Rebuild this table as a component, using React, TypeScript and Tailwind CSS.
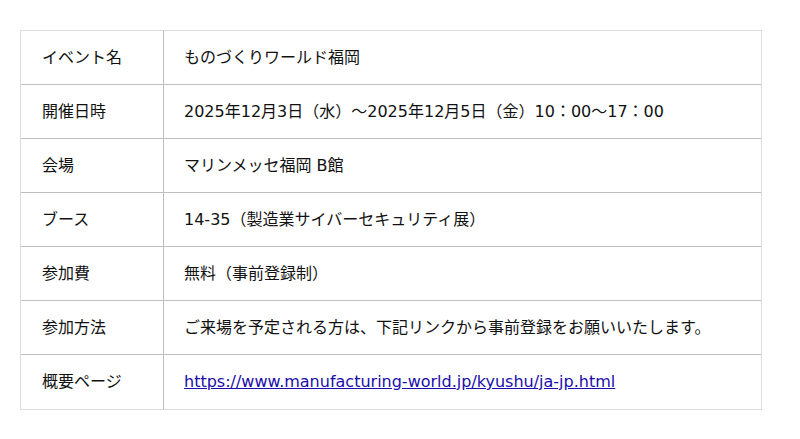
const rows: { label: string; value: string; href?: boolean }[] = [
  { label: 'イベント名', value: 'ものづくりワールド福岡' },
  { label: '開催日時', value: '2025年12月3日（水）～2025年12月5日（金）10：00～17：00' },
  { label: '会場', value: 'マリンメッセ福岡 B館' },
  { label: 'ブース', value: '14-35（製造業サイバーセキュリティ展）' },
  { label: '参加費', value: '無料（事前登録制）' },
  { label: '参加方法', value: 'ご来場を予定される方は、下記リンクから事前登録をお願いいたします。' },
  {
    label: '概要ページ',
    value: 'https://www.manufacturing-world.jp/kyushu/ja-jp.html',
    href: true,
  },
];

export default function App() {
  return (
    <div
      className="w-[800px] h-[439px] bg-white pt-[30px] pl-[20px] text-[16px] text-[#111]"
      style={{ fontFamily: '"DejaVu Sans", "Noto Sans CJK JP", sans-serif' }}
    >
      <div className="w-[742px] border border-[#dcdcdc]">
        {rows.map((r, i) => (
          <div
            key={r.label}
            className={`flex h-[54px] ${i < rows.length - 1 ? 'border-b border-[#bfbfbf]' : ''}`}
          >
            <div className="w-[143px] shrink-0 border-r border-[#bfbfbf] flex items-center pl-[21px]">
              {r.label}
            </div>
            <div className="flex items-center pl-[20px]">
              {r.href ? (
                <a href="#" className="text-[#1a0dab] underline">
                  {r.value}
                </a>
              ) : (
                r.value
              )}
            </div>
          </div>
        ))}
      </div>
    </div>
  );
}
